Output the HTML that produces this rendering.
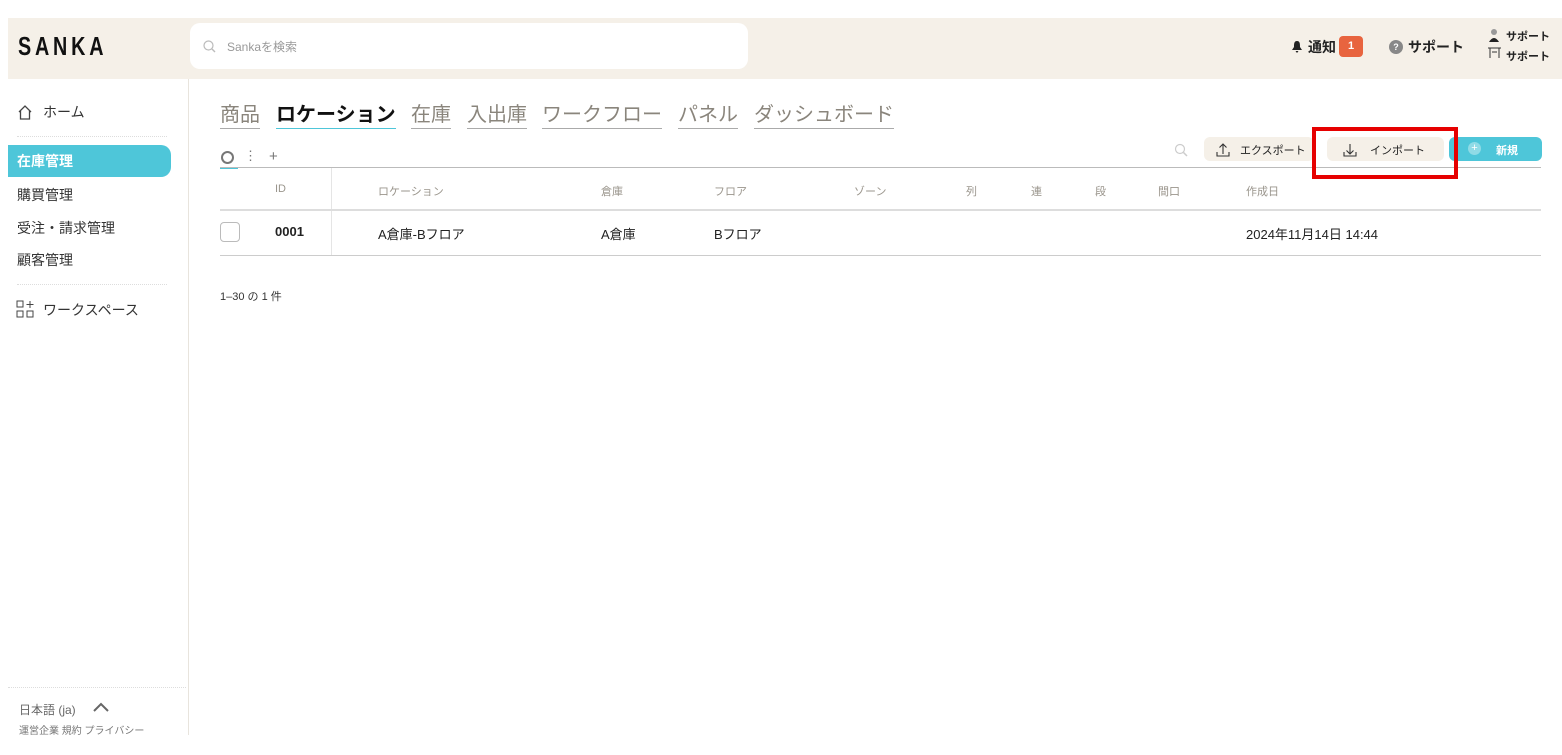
<!DOCTYPE html>
<html><head><meta charset="utf-8"><style>
*{box-sizing:border-box;margin:0;padding:0}
body{width:1562px;height:755px;background:#fff;font-family:"Liberation Sans","Noto Sans CJK JP",sans-serif;position:relative;overflow:hidden;color:#222}
.a{position:absolute;white-space:nowrap}
.hdr{left:8px;top:18px;width:1554px;height:61px;background:#f5f0e8}
.side{left:188px;top:79px;width:1px;height:656px;background:#e8e4dd}
.th{font-size:11px;color:#9a958c;top:183px}
.td{font-size:13px;color:#222;top:224px;font-weight:bold}
.tab{top:98px;font-size:20px;color:#8a857c;border-bottom:1px solid #aaa;padding-bottom:1px}
.nav{left:17px;font-size:14px;color:#333}
</style></head><body>
<div class="a hdr"></div>
<div class="a" style="left:18px;top:31px;font-size:26px;font-weight:bold;letter-spacing:5px;color:#111;transform:scaleX(.76);transform-origin:left">SANKA</div>
<div class="a" style="left:190px;top:23px;width:558px;height:46px;background:#fff;border-radius:10px"></div>
<svg class="a" style="left:203px;top:40px" width="13" height="13"><circle cx="5.5" cy="5.5" r="4.5" fill="none" stroke="#bbb" stroke-width="1.2"/><line x1="9" y1="9" x2="12" y2="12" stroke="#bbb" stroke-width="1.4"/></svg>
<div class="a" style="left:227px;top:38px;font-size:12px;color:#999">Sankaを検索</div>
<svg class="a" style="left:1291px;top:40px" width="12" height="13"><path d="M6 1C3 1 3 4 3 7L1 10H11L9 7C9 4 9 1 6 1ZM4.5 11H7.5L6 13Z" fill="#222"/></svg>
<div class="a" style="left:1308px;top:37px;font-size:14px;font-weight:bold">通知</div>
<div class="a" style="left:1339px;top:36px;width:24px;height:21px;background:#e8643f;border-radius:4px;color:#fff;font-size:11px;font-weight:bold;text-align:center;line-height:21px">1</div>
<div class="a" style="left:1389px;top:40px;width:14px;height:14px;border-radius:50%;background:#888;color:#fff;font-size:9px;text-align:center;line-height:14px;font-weight:bold">?</div>
<div class="a" style="left:1408px;top:37px;font-size:14px;font-weight:bold">サポート</div>
<svg class="a" style="left:1487px;top:28px" width="16" height="34"><circle cx="7" cy="4" r="3" fill="#999"/><path d="M2 14Q7 6 12 14Z" fill="#222"/><path d="M1 20H14M3 20V30M12 20V30M5 24H10" stroke="#333" fill="none"/></svg>
<div class="a" style="left:1506px;top:28px;font-size:11px;font-weight:bold">サポート</div>
<div class="a" style="left:1506px;top:48px;font-size:11px;font-weight:bold">サポート</div>

<div class="a side"></div>
<svg class="a" style="left:17px;top:104px" width="16" height="16"><path d="M2 8L8 2L14 8M3.5 7V15H12.5V7" fill="none" stroke="#444" stroke-width="1.3"/></svg>
<div class="a nav" style="left:43px;top:102px">ホーム</div>
<div class="a" style="left:17px;top:136px;width:150px;border-top:1px dotted #ddd"></div>
<div class="a" style="left:8px;top:145px;width:163px;height:32px;background:#4ec6d9;border-radius:0 10px 10px 0"></div>
<div class="a nav" style="top:151px;color:#fff;font-weight:bold">在庫管理</div>
<div class="a nav" style="top:185px">購買管理</div>
<div class="a nav" style="top:218px">受注・請求管理</div>
<div class="a nav" style="top:250px">顧客管理</div>
<div class="a" style="left:17px;top:284px;width:150px;border-top:1px dotted #ddd"></div>
<svg class="a" style="left:16px;top:300px" width="18" height="18"><rect x="1" y="1" width="6" height="6" fill="none" stroke="#444"/><rect x="1" y="11" width="6" height="6" fill="none" stroke="#444"/><rect x="11" y="11" width="6" height="6" fill="none" stroke="#444"/><path d="M14 1V8M10.5 4.5H17.5" stroke="#444"/></svg>
<div class="a nav" style="left:43px;top:300px">ワークスペース</div>
<div class="a" style="left:8px;top:687px;width:178px;border-top:1px dotted #ddd"></div>
<div class="a" style="left:19px;top:701px;font-size:12px;color:#666">日本語 (ja)</div>
<svg class="a" style="left:93px;top:702px" width="16" height="10"><path d="M1 9L8 2L15 9" fill="none" stroke="#666" stroke-width="2"/></svg>
<div class="a" style="left:19px;top:722px;font-size:10px;color:#777">運営企業 規約 プライバシー</div>

<div class="a tab" style="left:220px">商品</div>
<div class="a tab" style="left:276px;color:#111;font-weight:bold;border-bottom:1px solid #4ec6d9">ロケーション</div>
<div class="a tab" style="left:411px">在庫</div>
<div class="a tab" style="left:467px">入出庫</div>
<div class="a tab" style="left:542px">ワークフロー</div>
<div class="a tab" style="left:678px">パネル</div>
<div class="a tab" style="left:754px">ダッシュボード</div>

<div class="a" style="left:221px;top:151px;width:13px;height:13px;border:2.5px solid #777;border-radius:50%"></div>
<div class="a" style="left:220px;top:167px;width:18px;height:2px;background:#4ec6d9"></div>
<div class="a" style="left:244px;top:148px;font-size:13px;color:#777">⋮</div>
<div class="a" style="left:269px;top:148px;font-size:15px;color:#777">+</div>
<div class="a" style="left:220px;top:167px;width:1321px;border-top:1px solid #bbb"></div>
<svg class="a" style="left:1174px;top:143px" width="14" height="14"><circle cx="6" cy="6" r="4.5" fill="none" stroke="#ccc" stroke-width="1.2"/><line x1="9.5" y1="9.5" x2="13" y2="13" stroke="#ccc" stroke-width="1.5"/></svg>
<div class="a" style="left:1204px;top:137px;width:110px;height:24px;background:#f5f0e8;border-radius:6px"></div>
<svg class="a" style="left:1216px;top:142px" width="14" height="15"><path d="M7 12V2M3.5 5.5L7 2L10.5 5.5M1 10V14H13V10" fill="none" stroke="#333" stroke-width="1.1"/></svg>
<div class="a" style="left:1240px;top:142px;font-size:11px;color:#222">エクスポート</div>
<div class="a" style="left:1327px;top:137px;width:117px;height:24px;background:#f5f0e8;border-radius:6px"></div>
<svg class="a" style="left:1343px;top:142px" width="14" height="15"><path d="M7 2V12M3.5 8.5L7 12L10.5 8.5M1 10V14H13V10" fill="none" stroke="#333" stroke-width="1.1"/></svg>
<div class="a" style="left:1370px;top:142px;font-size:11px;color:#222">インポート</div>
<div class="a" style="left:1449px;top:137px;width:93px;height:24px;background:#4ec6d9;border-radius:6px"></div>
<div class="a" style="left:1468px;top:142px;width:13px;height:13px;border-radius:50%;background:#8fdbe6;color:#fff;font-size:11px;text-align:center;line-height:13px">+</div>
<div class="a" style="left:1496px;top:142px;font-size:11px;color:#fff;font-weight:bold">新規</div>
<div class="a" style="left:1312px;top:127px;width:146px;height:52px;border:4px solid #e60000"></div>

<div class="a" style="left:331px;top:168px;width:1px;height:87px;background:#e5e5e5"></div>
<div class="a th" style="left:275px">ID</div>
<div class="a th" style="left:378px">ロケーション</div>
<div class="a th" style="left:601px">倉庫</div>
<div class="a th" style="left:714px">フロア</div>
<div class="a th" style="left:854px">ゾーン</div>
<div class="a th" style="left:966px">列</div>
<div class="a th" style="left:1031px">連</div>
<div class="a th" style="left:1095px">段</div>
<div class="a th" style="left:1158px">間口</div>
<div class="a th" style="left:1246px">作成日</div>
<div class="a" style="left:220px;top:209px;width:1321px;border-top:2px solid #ddd"></div>
<div class="a" style="left:220px;top:222px;width:20px;height:20px;border:1px solid #bbb;border-radius:4px"></div>
<div class="a td" style="left:275px">0001</div>
<div class="a td" style="left:378px;font-weight:normal">A倉庫-Bフロア</div>
<div class="a td" style="left:601px;font-weight:normal">A倉庫</div>
<div class="a td" style="left:714px;font-weight:normal">Bフロア</div>
<div class="a td" style="left:1246px;font-weight:normal">2024年11月14日 14:44</div>
<div class="a" style="left:220px;top:255px;width:1321px;border-top:1px solid #ccc"></div>
<div class="a" style="left:220px;top:288px;font-size:11px;color:#333">1–30 の 1 件</div>
</body></html>
